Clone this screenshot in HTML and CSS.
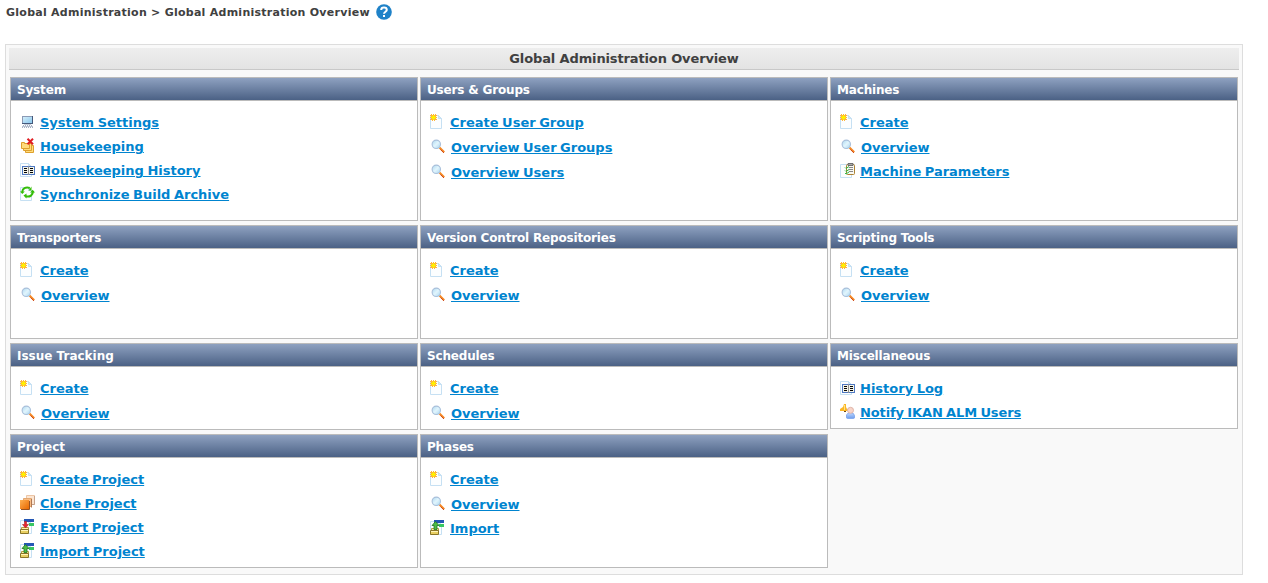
FILE: index.html
```
<!DOCTYPE html>
<html lang="en">
<head>
<meta charset="utf-8">
<title>Global Administration Overview</title>
<link rel="stylesheet" href="styles.css">
</head>
<body>
<svg class="defs" aria-hidden="true">
  <defs>
    <linearGradient id="glass" x2="1" y2="1"><stop stop-color="#a9d7ef"/><stop offset=".5" stop-color="#e2f5fd"/><stop offset="1" stop-color="#a5d5ef"/></linearGradient>
    <linearGradient id="screen" x2="1" y2="1"><stop stop-color="#d8f0fb"/><stop offset="1" stop-color="#86c5ec"/></linearGradient>
    <linearGradient id="orange" x2="1" y2="1"><stop stop-color="#ffb052"/><stop offset="1" stop-color="#e96800"/></linearGradient>
    <linearGradient id="shirt" x2="0" y2="1"><stop stop-color="#c5dcff"/><stop offset="1" stop-color="#6d9cec"/></linearGradient>
    <symbol id="page" viewBox="0 0 16 16"><path d="M.5 1.500H8.500L11.500 4.500V14.500H.5Z" fill="#fcfeff" stroke="#c6e0f3"/><path d="M8.500 1.500V4.500H11.500Z" fill="#d6eaf8" stroke="#c6e0f3"/></symbol>
    <symbol id="create" viewBox="0 0 16 16"><use href="#page"/><path d="M1 0h1v1h1V0h1v1h1V0h1v1h1v1H6v1h1v1H6v1h1v1H5v1H4V6H3v1H2V6H0V5h1V4H0V3h1V2H0V1h1Z" fill="#ffb43a"/><path d="M2 2h1V1h1v1h1v1h1v1H5v1H4v1H3V5H2V4H1V3h1Z" fill="#ffef00"/></symbol>
    <symbol id="search" viewBox="0 0 16 16"><path d="M9.500 8.500L14.200 13.300" stroke="#f58a24" stroke-width="2"/><path d="M10.500 10.500L14 14" stroke="#c8431b" stroke-width=".9"/><circle cx="6.300" cy="5.300" r="4.200" fill="url(#glass)" stroke="#a9bfda" stroke-width="1.100"/></symbol>
    <symbol id="computer" viewBox="0 0 16 16"><rect x="2.500" y="2.500" width="10" height="7" fill="url(#screen)" stroke="#8b9ab5"/><path d="M12.500 2v8M2 9.500h11" stroke="#46597b"/><path d="M4 10.500h7" stroke="#c6cddb"/><path d="M3 11.500h9M2 13.500h11" stroke="#a5afc1" stroke-dasharray="1 1"/><path d="M2 12.500h11" stroke="#bbc3d2"/></symbol>
    <symbol id="housekeeping" viewBox="0 0 16 16"><g fill="#ffdc7d" stroke="#dea02d"><path d="M5.500 7.500H13.500V14.500H5.500Z"/><path d="M3.500 5.500H11.500V12.500H3.500Z"/><path d="M1.500 4.500H4.500V5.500H9.500V10.500H1.500Z"/></g><path d="M7.500.8L13 6.200M13 .8L7.500 6.200" stroke="#e01e23" stroke-width="2"/></symbol>
    <symbol id="history" viewBox="0 0 16 16"><use href="#page"/><rect x="2.500" y="4.500" width="12" height="8" fill="#f5f5e8" stroke="#4e78c3"/><path d="M8.500 4v9" stroke="#939393"/><path d="M4 6.500h3M4 8.500h3M4 10.500h3M10 6.500h3M10 8.500h3M10 10.500h3" stroke="#050505"/></symbol>
    <symbol id="sync" viewBox="0 0 16 16"><use href="#page"/><path d="M2.200 6C2.500 2.500 5.500.8 9.800 2M13 5C13 9 10 11.500 5.800 10.200" fill="none" stroke="#35bd08" stroke-width="2"/><path d="M8.500 4.500L11.500.5V4.500ZM10 6.500L12.700 3.800 15 6.500ZM6.500 7.500V12.500L3.500 9.500Z" fill="#35bd08"/><path d="M0 5.500h4.800L2.300 8Z" fill="#35bd08"/></symbol>
    <symbol id="params" viewBox="0 0 16 16"><use href="#page"/><rect x="6.500" y="1.500" width="8" height="10" rx="1" fill="#f8f8f2" stroke="#ad8233"/><path d="M8 .5h5v2H8Z" fill="#aaa" stroke="#555" stroke-width=".8"/><path d="M9 4.500h4M9 6.500h4M9 8.500h4" stroke="#888"/><path d="M5 4.500l1 1 3-2M5 7.500l1 1 3-2M5 10l1 1 3-2" fill="none" stroke="#2dbd45"/></symbol>
    <symbol id="notify" viewBox="0 0 16 16"><path d="M4 0h2v3l1 2h3v2H0V5l3-2Z" fill="#fbb725"/><path d="M4.500 1v5" stroke="#ffe38a"/><path d="M4 7.500h2" stroke="#6d4818"/><path d="M6.500 14V11Q7.500 8.500 10.500 8.500Q14.500 9 14.500 12V14L13 14.500H8Z" fill="url(#shirt)" stroke="#86adf0"/><circle cx="10.500" cy="6.300" r="3" fill="#f8d4c8" stroke="#dfb5a9"/></symbol>
    <symbol id="clone" viewBox="0 0 16 16"><path d="M6.500.5h8v9h-8Z" fill="#fce5d1" stroke="#ecc5a5"/><path d="M14.500 1v8.500H12" fill="none" stroke="#c6a28b"/><path d="M3.500 3.500h8v8h-8Z" fill="#f9bd86" stroke="#e2a873"/><path d="M11.500 4v8.500" stroke="#b17851"/><path d="M0 5h9v9H0Z" fill="url(#orange)"/><path d="M9.500 6v8.500H1" fill="none" stroke="#985221"/></symbol>
    <symbol id="transfer" viewBox="0 0 16 16"><use href="#page"/><path d="M4 0h10v3H4Z" fill="#2457b5"/><path d="M9 4h5v3H9Z" fill="#38c763"/><path d="M1.500 8.500H8.500V10.500H1.500Z" fill="#fff2a4" stroke="#b29c43"/><path d="M.5 10.500H8.500V14.500H.5Z" fill="#e8cf62" stroke="#8a7628"/><path d="M1 11.500h7" stroke="#fff5b8"/></symbol>
    <symbol id="export" viewBox="0 0 16 16"><use href="#transfer"/><path d="M4.500 2.500h2v3h2L5.500 9 2.500 5.500h2Z" fill="#e9252d" stroke="#ad2026" stroke-width=".6"/></symbol>
    <symbol id="import" viewBox="0 0 16 16"><use href="#transfer"/><path d="M5.500 1.500L9 5.500H7V9.500H4V5.500H2Z" fill="#4dbb46" stroke="#207324" stroke-width=".8"/></symbol>
  </defs>
</svg>
<header class="breadcrumb"><span>Global Administration &gt; Global Administration Overview</span><svg class="help" viewBox="0 0 16 16"><circle cx="8" cy="8" r="7.800" fill="#1f82c8"/><path d="M5.200 6C5.200 2.800 10.800 2.800 10.800 6C10.800 7.700 8 7.800 8 9.800" fill="none" stroke="#fff" stroke-width="2"/><path d="M7 11h2v2H7Z" fill="#fff"/></svg></header>
<main class="overview">
  <h1 class="overview-title"><span>Global Administration Overview</span></h1>
  <div class="panels">
    <section class="panel"><h2><span>System</span></h2><ul>
      <li><svg><use href="#computer"/></svg><a href="#">System Settings</a></li>
      <li><svg><use href="#housekeeping"/></svg><a href="#">Housekeeping</a></li>
      <li><svg><use href="#history"/></svg><a href="#">Housekeeping History</a></li>
      <li><svg><use href="#sync"/></svg><a href="#">Synchronize Build Archive</a></li></ul></section>
    <section class="panel"><h2><span>Users &amp; Groups</span></h2><ul>
      <li><svg><use href="#create"/></svg><a href="#">Create User Group</a></li>
      <li class="view"><svg><use href="#search"/></svg><a href="#">Overview User Groups</a></li>
      <li class="view"><svg><use href="#search"/></svg><a href="#">Overview Users</a></li></ul></section>
    <section class="panel"><h2><span>Machines</span></h2><ul>
      <li><svg><use href="#create"/></svg><a href="#">Create</a></li>
      <li class="view"><svg><use href="#search"/></svg><a href="#">Overview</a></li>
      <li><svg><use href="#params"/></svg><a href="#">Machine Parameters</a></li></ul></section>
    <section class="panel"><h2><span>Transporters</span></h2><ul>
      <li><svg><use href="#create"/></svg><a href="#">Create</a></li>
      <li class="view"><svg><use href="#search"/></svg><a href="#">Overview</a></li></ul></section>
    <section class="panel"><h2><span>Version Control Repositories</span></h2><ul>
      <li><svg><use href="#create"/></svg><a href="#">Create</a></li>
      <li class="view"><svg><use href="#search"/></svg><a href="#">Overview</a></li></ul></section>
    <section class="panel"><h2><span>Scripting Tools</span></h2><ul>
      <li><svg><use href="#create"/></svg><a href="#">Create</a></li>
      <li class="view"><svg><use href="#search"/></svg><a href="#">Overview</a></li></ul></section>
    <section class="panel"><h2 class="wide"><span>Issue Tracking</span></h2><ul>
      <li><svg><use href="#create"/></svg><a href="#">Create</a></li>
      <li class="view"><svg><use href="#search"/></svg><a href="#">Overview</a></li></ul></section>
    <section class="panel"><h2><span>Schedules</span></h2><ul>
      <li><svg><use href="#create"/></svg><a href="#">Create</a></li>
      <li class="view"><svg><use href="#search"/></svg><a href="#">Overview</a></li></ul></section>
    <section class="panel panel-short"><h2><span>Miscellaneous</span></h2><ul>
      <li><svg><use href="#history"/></svg><a href="#">History Log</a></li>
      <li><svg><use href="#notify"/></svg><a class="tight" href="#">Notify IKAN ALM Users</a></li></ul></section>
    <section class="panel"><h2 class="wide"><span>Project</span></h2><ul>
      <li><svg><use href="#create"/></svg><a href="#">Create Project</a></li>
      <li><svg><use href="#clone"/></svg><a href="#">Clone Project</a></li>
      <li><svg><use href="#export"/></svg><a href="#">Export Project</a></li>
      <li><svg><use href="#import"/></svg><a href="#">Import Project</a></li></ul></section>
    <section class="panel"><h2><span>Phases</span></h2><ul>
      <li><svg><use href="#create"/></svg><a href="#">Create</a></li>
      <li class="view"><svg><use href="#search"/></svg><a href="#">Overview</a></li>
      <li><svg><use href="#import"/></svg><a href="#">Import</a></li></ul></section>
  </div>
</main>
</body>
</html>
```
FILE: styles.css
```
* { box-sizing: border-box; }
body { margin: 0; padding: 4px 5px 0; background: #fff; color: #404040; font-family: Verdana, "DejaVu Sans", sans-serif; font-weight: bold; }
.defs { display: block; width: 0; height: 0; }
.breadcrumb { display: flex; align-items: center; gap: 6px; height: 16px; padding-left: 1px; font-size: 11px; line-height: 16px; letter-spacing: .26px; white-space: nowrap; }
.breadcrumb span { padding-top: 1px; }
.help { width: 16px; height: 16px; }
.overview { width: 1238px; height: 531px; margin-top: 24px; padding: 3px; border: 1px solid #ddd; background: #f9f9f9; }
.overview-title { width: 1230px; height: 22px; margin: 0; border-bottom: 1px solid #c8c8c8; background: linear-gradient(#eee, #e3e3e3); font-size: 13px; line-height: 21px; letter-spacing: -.13px; text-align: center; }
.panels { display: grid; grid-template-columns: repeat(3, 408px); grid-template-rows: 144px 114px 87px 134px; gap: 4px 2px; padding: 7px 1px 0; }
.panel { border: 1px solid #bbb; background: #fff; }
.panel-short { height: 86px; }
.panel h2 { height: 23px; margin: 0; padding: 1px 0 0 6px; border-bottom: 1px solid #bbb; background: linear-gradient(#8ea1c0, #4b6185); color: #fff; font-size: 12px; line-height: 22px; letter-spacing: -.17px; }
.panel h2.wide { letter-spacing: 0; }
.panel ul { margin: 0; padding: 9px 9px 0; list-style: none; }
.panel li { display: flex; align-items: center; gap: 4px; height: 24px; font-size: 13px; line-height: 16px; white-space: nowrap; }
.panel li.view { height: 25px; padding-top: 1px; gap: 5px; }
.panel li svg { width: 16px; height: 16px; flex: none; }
.panel a { padding-top: 2px; color: #0084cf; text-decoration: underline; word-spacing: -1px; }
.panel a.tight { letter-spacing: -.12px; }
```
